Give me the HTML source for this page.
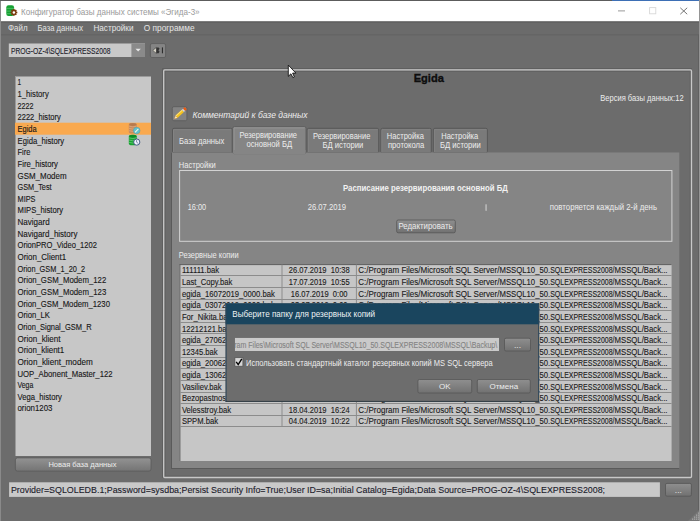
<!DOCTYPE html>
<html><head><meta charset="utf-8"><title>Конфигуратор базы данных системы «Эгида-3»</title>
<style>html,body{margin:0;padding:0;width:700px;height:521px;overflow:hidden;background:#6c6c6c;font-family:"Liberation Sans",sans-serif}svg{display:block}</style>
</head><body>
<svg width="700" height="521" viewBox="0 0 700 521" font-family="Liberation Sans, sans-serif"><rect x="0" y="0" width="700" height="521" fill="#6c6c6c" /><rect x="0" y="0" width="1" height="521" fill="#8a8a8a" /><rect x="0" y="0" width="612" height="1" fill="#5c5c5c" /><rect x="612" y="0" width="88" height="1" fill="#3d6fb5" /><rect x="1" y="1" width="698" height="20.6" fill="#ffffff" /><rect x="698" y="22" width="1" height="499" fill="#606060" /><rect x="699" y="0" width="1" height="521" fill="#8a8a8a" /><g><rect x="6.3" y="5.2" width="7.8" height="10.8" rx="2.2" fill="#14a032"/><line x1="6.3" y1="8.4" x2="14.1" y2="8.4" stroke="#6ccf82" stroke-width="0.6"/><line x1="6.3" y1="11.1" x2="14.1" y2="11.1" stroke="#6ccf82" stroke-width="0.6"/><line x1="6.3" y1="13.7" x2="14.1" y2="13.7" stroke="#6ccf82" stroke-width="0.6"/><polygon points="17.32,11.64 17.32,13.16 16.24,13.28 16.18,13.43 16.86,14.28 15.78,15.36 14.93,14.68 14.78,14.74 14.66,15.82 13.14,15.82 13.02,14.74 12.87,14.68 12.02,15.36 10.94,14.28 11.62,13.43 11.56,13.28 10.48,13.16 10.48,11.64 11.56,11.52 11.62,11.37 10.94,10.52 12.02,9.44 12.87,10.12 13.02,10.06 13.14,8.98 14.66,8.98 14.78,10.06 14.93,10.12 15.78,9.44 16.86,10.52 16.18,11.37 16.24,11.52" fill="#7a3a0c"/><circle cx="13.9" cy="12.4" r="1.25" fill="#ffffff"/></g><text x="21.1" y="14.6" font-size="9.6" fill="#9a9a9a" textLength="178.5" lengthAdjust="spacingAndGlyphs">Конфигуратор базы данных системы «Эгида-3»</text><line x1="618" y1="10.9" x2="625" y2="10.9" stroke="#9a9a9a" stroke-width="1"/><rect x="649.6" y="7.6" width="6.2" height="6.2" fill="none" stroke="#d8d8d8" stroke-width="0.9" /><path d="M680.3 7.8 L687.2 14.2 M687.2 7.8 L680.3 14.2" stroke="#666" stroke-width="0.9"/><rect x="1" y="21.6" width="698" height="13" fill="#6b6b6b" /><line x1="1" y1="22" x2="699" y2="22" stroke="#5a5a5a" stroke-width="1"/><line x1="1" y1="34.8" x2="699" y2="34.8" stroke="#636363" stroke-width="1"/><text x="8" y="31.1" font-size="9" fill="#e4e4e4" textLength="19.6" lengthAdjust="spacingAndGlyphs">Файл</text><text x="37.5" y="31.1" font-size="9" fill="#e4e4e4" textLength="45.5" lengthAdjust="spacingAndGlyphs">База данных</text><text x="93.4" y="31.1" font-size="9" fill="#e4e4e4" textLength="40.1" lengthAdjust="spacingAndGlyphs">Настройки</text><text x="143.8" y="31.1" font-size="9" fill="#e4e4e4" textLength="50.8" lengthAdjust="spacingAndGlyphs">О программе</text><rect x="8.8" y="43.5" width="136.2" height="13.5" fill="#c9c9c9" /><rect x="131.4" y="43.5" width="13.6" height="13.5" fill="#8a8a8a" /><path d="M135.5 48.8 L140.8 48.8 L138.15 51.6 Z" fill="#e8e8e8"/><text x="11" y="54" font-size="9" fill="#1c1c2a" textLength="99.5" lengthAdjust="spacingAndGlyphs" stroke="#1c1c2a" stroke-width="0.12">PROG-OZ-4\SQLEXPRESS2008</text><rect x="150.4" y="43.6" width="15.2" height="13.9" fill="#848484" stroke="#5a5a5a" stroke-width="0.8" rx="1.5" /><path d="M152.8 50.4 L156.4 47.4 L156.4 53.4 Z" fill="#dcd8cc" stroke="#2e2e2e" stroke-width="0.5"/><path d="M156.4 47.6 L158.6 47.6 L159.6 48.8 L158.4 50.3 L159.6 51.8 L158.6 53.2 L156.4 53.2 Z" fill="#333333"/><rect x="161.9" y="47.4" width="1.1" height="5.9" fill="#2e2e2e" /><rect x="15" y="76" width="136" height="380" fill="#c7c7c7" /><line x1="15.5" y1="76" x2="15.5" y2="456" stroke="#9a9a9a" stroke-width="1"/><line x1="15" y1="76.5" x2="151" y2="76.5" stroke="#9a9a9a" stroke-width="1"/><rect x="15" y="122.7" width="136" height="12" fill="#f9a94f" /><text transform="translate(17.5,85.35) scale(0.72,1)" x="0" y="0" font-size="9" fill="#161616" stroke="#161616" stroke-width="0.12">1</text><text transform="translate(17.5,96.996) scale(0.857,1)" x="0" y="0" font-size="9" fill="#161616" stroke="#161616" stroke-width="0.12">1_history</text><text transform="translate(17.5,108.642) scale(0.8,1)" x="0" y="0" font-size="9" fill="#161616" stroke="#161616" stroke-width="0.12">2222</text><text transform="translate(17.5,120.288) scale(0.84,1)" x="0" y="0" font-size="9" fill="#161616" stroke="#161616" stroke-width="0.12">2222_history</text><text transform="translate(17.5,131.934) scale(0.835,1)" x="0" y="0" font-size="9" fill="#161616" stroke="#161616" stroke-width="0.12">Egida</text><text transform="translate(17.5,143.57999999999998) scale(0.858,1)" x="0" y="0" font-size="9" fill="#161616" stroke="#161616" stroke-width="0.12">Egida_history</text><text transform="translate(17.5,155.226) scale(0.833,1)" x="0" y="0" font-size="9" fill="#161616" stroke="#161616" stroke-width="0.12">Fire</text><text transform="translate(17.5,166.872) scale(0.862,1)" x="0" y="0" font-size="9" fill="#161616" stroke="#161616" stroke-width="0.12">Fire_history</text><text transform="translate(17.5,178.518) scale(0.885,1)" x="0" y="0" font-size="9" fill="#161616" stroke="#161616" stroke-width="0.12">GSM_Modem</text><text transform="translate(17.5,190.164) scale(0.814,1)" x="0" y="0" font-size="9" fill="#161616" stroke="#161616" stroke-width="0.12">GSM_Test</text><text transform="translate(17.5,201.81) scale(0.818,1)" x="0" y="0" font-size="9" fill="#161616" stroke="#161616" stroke-width="0.12">MIPS</text><text transform="translate(17.5,213.456) scale(0.852,1)" x="0" y="0" font-size="9" fill="#161616" stroke="#161616" stroke-width="0.12">MIPS_history</text><text transform="translate(17.5,225.102) scale(0.894,1)" x="0" y="0" font-size="9" fill="#161616" stroke="#161616" stroke-width="0.12">Navigard</text><text transform="translate(17.5,236.74800000000002) scale(0.888,1)" x="0" y="0" font-size="9" fill="#161616" stroke="#161616" stroke-width="0.12">Navigard_history</text><text transform="translate(17.5,248.394) scale(0.843,1)" x="0" y="0" font-size="9" fill="#161616" stroke="#161616" stroke-width="0.12">OrionPRO_Video_1202</text><text transform="translate(17.5,260.03999999999996) scale(0.885,1)" x="0" y="0" font-size="9" fill="#161616" stroke="#161616" stroke-width="0.12">Orion_Client1</text><text transform="translate(17.5,271.68600000000004) scale(0.82,1)" x="0" y="0" font-size="9" fill="#161616" stroke="#161616" stroke-width="0.12">Orion_GSM_1_20_2</text><text transform="translate(17.5,283.332) scale(0.867,1)" x="0" y="0" font-size="9" fill="#161616" stroke="#161616" stroke-width="0.12">Orion_GSM_Modem_122</text><text transform="translate(17.5,294.978) scale(0.867,1)" x="0" y="0" font-size="9" fill="#161616" stroke="#161616" stroke-width="0.12">Orion_GSM_Modem_123</text><text transform="translate(17.5,306.624) scale(0.86,1)" x="0" y="0" font-size="9" fill="#161616" stroke="#161616" stroke-width="0.12">Orion_GSM_Modem_1230</text><text transform="translate(17.5,318.27) scale(0.855,1)" x="0" y="0" font-size="9" fill="#161616" stroke="#161616" stroke-width="0.12">Orion_LK</text><text transform="translate(17.5,329.91600000000005) scale(0.834,1)" x="0" y="0" font-size="9" fill="#161616" stroke="#161616" stroke-width="0.12">Orion_Signal_GSM_R</text><text transform="translate(17.5,341.562) scale(0.896,1)" x="0" y="0" font-size="9" fill="#161616" stroke="#161616" stroke-width="0.12">Orion_klient</text><text transform="translate(17.5,353.20799999999997) scale(0.881,1)" x="0" y="0" font-size="9" fill="#161616" stroke="#161616" stroke-width="0.12">Orion_klient1</text><text transform="translate(17.5,364.85400000000004) scale(0.908,1)" x="0" y="0" font-size="9" fill="#161616" stroke="#161616" stroke-width="0.12">Orion_klient_modem</text><text transform="translate(17.5,376.5) scale(0.86,1)" x="0" y="0" font-size="9" fill="#161616" stroke="#161616" stroke-width="0.12">UOP_Abonent_Master_122</text><text transform="translate(17.5,388.1460000000001) scale(0.771,1)" x="0" y="0" font-size="9" fill="#161616" stroke="#161616" stroke-width="0.12">Vega</text><text transform="translate(17.5,399.79200000000003) scale(0.85,1)" x="0" y="0" font-size="9" fill="#161616" stroke="#161616" stroke-width="0.12">Vega_history</text><text transform="translate(17.5,411.438) scale(0.875,1)" x="0" y="0" font-size="9" fill="#161616" stroke="#161616" stroke-width="0.12">orion1203</text><rect x="128.8" y="123.0" width="8" height="10.5" rx="3" ry="1.8" fill="#c98b5a"/><ellipse cx="132.8" cy="124.6" rx="3.6" ry="1.3" fill="#b87a4c"/><path d="M129.10000000000002 126.2 Q132.8 127.5 136.5 126.2" stroke="#e8b48a" stroke-width="0.6" fill="none"/><path d="M129.10000000000002 128.4 Q132.8 129.70000000000002 136.5 128.4" stroke="#e8b48a" stroke-width="0.6" fill="none"/><path d="M129.10000000000002 130.7 Q132.8 132.0 136.5 130.7" stroke="#e8b48a" stroke-width="0.6" fill="none"/><circle cx="136.7" cy="130.6" r="3.3" fill="#62c2cc" stroke="#4a9aa8" stroke-width="0.5"/><path d="M135 132.3 L138.4 128.9" stroke="#eef8e8" stroke-width="1.1"/><rect x="128.8" y="134.7" width="8" height="10.5" rx="3" ry="1.8" fill="#17a232"/><ellipse cx="132.8" cy="136.29999999999998" rx="3.6" ry="1.3" fill="#0d8a26"/><path d="M129.10000000000002 137.89999999999998 Q132.8 139.2 136.5 137.89999999999998" stroke="#86d892" stroke-width="0.6" fill="none"/><path d="M129.10000000000002 140.1 Q132.8 141.4 136.5 140.1" stroke="#86d892" stroke-width="0.6" fill="none"/><path d="M129.10000000000002 142.39999999999998 Q132.8 143.7 136.5 142.39999999999998" stroke="#86d892" stroke-width="0.6" fill="none"/><circle cx="136.75" cy="142.1" r="3.1" fill="#f2f2ff" stroke="#34507a" stroke-width="0.9"/><path d="M136.6 140.1 L136.6 142.2 L138.3 143.4" stroke="#5a6f94" stroke-width="0.8" fill="none"/><defs><linearGradient id="btn" x1="0" y1="0" x2="0" y2="1"><stop offset="0" stop-color="#939393"/><stop offset="1" stop-color="#747474"/></linearGradient><linearGradient id="btn2" x1="0" y1="0" x2="0" y2="1"><stop offset="0" stop-color="#8f8f8f"/><stop offset="1" stop-color="#717171"/></linearGradient></defs><rect x="15.4" y="457.9" width="135.6" height="13.2" fill="url(#btn)" stroke="#5a5a5a" stroke-width="0.8" rx="2" /><text x="48.4" y="467.2" font-size="8" fill="#ececec" textLength="68.1" lengthAdjust="spacingAndGlyphs">Новая база данных</text><line x1="162.5" y1="68.5" x2="162.5" y2="478" stroke="#5f5f5f" stroke-width="1"/><line x1="162.5" y1="68.5" x2="692" y2="68.5" stroke="#5f5f5f" stroke-width="1"/><rect x="165.2" y="71.4" width="525" height="404.7" fill="none" stroke="#626262" stroke-width="1" /><rect x="163.7" y="69.9" width="527.8" height="407.6" fill="none" stroke="#c8c8c8" stroke-width="1.3" rx="1" /><text x="428.8" y="81.7" font-size="11.2" fill="#0e0e0e" font-weight="bold" text-anchor="middle" textLength="30.2" lengthAdjust="spacingAndGlyphs" stroke="#0e0e0e" stroke-width="0.35">Egida</text><text x="600.3" y="100.7" font-size="8.5" fill="#ececec" textLength="83.3" lengthAdjust="spacingAndGlyphs">Версия базы данных:12</text><rect x="172.3" y="106.7" width="14.6" height="14" fill="#838383" stroke="#5a5a5a" stroke-width="0.8" rx="1.5" /><g transform="translate(174.3,118.9) rotate(-43)"><path d="M0 0 L3.2 -1.5 L3.2 1.5 Z" fill="#fff2cc" stroke="#d08a30" stroke-width="0.4"/><rect x="3.2" y="-1.5" width="8.6" height="3" fill="#f4c21e"/><rect x="3.2" y="-1.5" width="8.6" height="1" fill="#ffe070"/><rect x="11.8" y="-1.5" width="1.6" height="3" fill="#d8dde0"/><rect x="13.4" y="-1.7" width="2.4" height="3.4" rx="1.2" fill="#ee5a10"/></g><text x="192.4" y="118" font-size="9" fill="#ececec" font-style="italic" textLength="115.2" lengthAdjust="spacingAndGlyphs">Комментарий к базе данных</text><rect x="172.5" y="128.3" width="59.69999999999999" height="24.5" fill="#7a7a7a" stroke="#585858" stroke-width="1" rx="1.5" /><path d="M173.5 152 L173.5 129.8 L231.2 129.8" stroke="#858585" stroke-width="0.8" fill="none"/><rect x="307.2" y="128.3" width="71.5" height="24.5" fill="#7a7a7a" stroke="#585858" stroke-width="1" rx="1.5" /><path d="M308.2 152 L308.2 129.8 L377.7 129.8" stroke="#858585" stroke-width="0.8" fill="none"/><rect x="380.9" y="128.3" width="50.400000000000034" height="24.5" fill="#7a7a7a" stroke="#585858" stroke-width="1" rx="1.5" /><path d="M381.9 152 L381.9 129.8 L430.3 129.8" stroke="#858585" stroke-width="0.8" fill="none"/><rect x="433.4" y="128.3" width="54.0" height="24.5" fill="#7a7a7a" stroke="#585858" stroke-width="1" rx="1.5" /><path d="M434.4 152 L434.4 129.8 L486.4 129.8" stroke="#858585" stroke-width="0.8" fill="none"/><rect x="171" y="152.5" width="508.3" height="316.5" fill="#858585" /><line x1="171" y1="468.5" x2="679.3" y2="468.5" stroke="#5a5a5a" stroke-width="1"/><line x1="171.5" y1="152.5" x2="171.5" y2="469" stroke="#5a5a5a" stroke-width="1"/><rect x="232.8" y="126.6" width="73.2" height="27" fill="#858585" stroke="#5c5c5c" stroke-width="0.9" rx="1.5" /><path d="M234 153 L234 127.9 L304.6 127.9" stroke="#979797" stroke-width="0.9" fill="none"/><rect x="233.3" y="150" width="72.2" height="4" fill="#858585" /><text x="179" y="144" font-size="8.5" fill="#ececec" textLength="45.3" lengthAdjust="spacingAndGlyphs">База данных</text><text x="239.6" y="138.2" font-size="8.5" fill="#ececec" textLength="57.4" lengthAdjust="spacingAndGlyphs">Резервирование</text><text transform="translate(269.3,147.4) scale(0.9,1)" x="0" y="0" font-size="8.5" fill="#ececec" text-anchor="middle">основной БД</text><text x="313" y="138.9" font-size="8.5" fill="#ececec" textLength="57.3" lengthAdjust="spacingAndGlyphs">Резервирование</text><text transform="translate(342.9,147.9) scale(0.9,1)" x="0" y="0" font-size="8.5" fill="#ececec" text-anchor="middle">БД истории</text><text x="386.8" y="138.9" font-size="8.5" fill="#ececec" textLength="37.1" lengthAdjust="spacingAndGlyphs">Настройка</text><text transform="translate(406.1,147.9) scale(0.9,1)" x="0" y="0" font-size="8.5" fill="#ececec" text-anchor="middle">протокола</text><text x="441.2" y="138.9" font-size="8.5" fill="#ececec" textLength="37.1" lengthAdjust="spacingAndGlyphs">Настройка</text><text transform="translate(460.4,147.9) scale(0.9,1)" x="0" y="0" font-size="8.5" fill="#ececec" text-anchor="middle">БД истории</text><text x="178.8" y="167.7" font-size="8.5" fill="#ececec" textLength="37" lengthAdjust="spacingAndGlyphs">Настройки</text><rect x="179.6" y="170.5" width="492.3" height="70.8" fill="none" stroke="#d2d2d2" stroke-width="1" /><text x="343" y="190.7" font-size="8.2" fill="#f2f2f2" font-weight="bold" textLength="164.8" lengthAdjust="spacingAndGlyphs">Расписание резервирования основной БД</text><text x="187.7" y="209.9" font-size="8.5" fill="#ececec" textLength="18.5" lengthAdjust="spacingAndGlyphs">16:00</text><text x="307.7" y="209.9" font-size="8.5" fill="#ececec" textLength="38.3" lengthAdjust="spacingAndGlyphs">26.07.2019</text><rect x="485.6" y="204.3" width="0.9" height="6.5" fill="#e0e0e0" /><text x="549.8" y="209.7" font-size="8.5" fill="#ececec" textLength="107.2" lengthAdjust="spacingAndGlyphs">повторяется каждый 2-й день</text><rect x="396.7" y="220" width="58.6" height="12.8" fill="url(#btn2)" stroke="#555555" stroke-width="0.8" rx="1.5" /><text x="398.4" y="229.1" font-size="8.5" fill="#ececec" textLength="54.3" lengthAdjust="spacingAndGlyphs">Редактировать</text><text x="178.8" y="257.6" font-size="8.5" fill="#ececec" textLength="59.9" lengthAdjust="spacingAndGlyphs">Резервные копии</text><rect x="179.5" y="264.2" width="492.1" height="196.8" fill="#c6c6c6" /><line x1="179.9" y1="264.2" x2="179.9" y2="461" stroke="#5c5c5c" stroke-width="1"/><line x1="179.5" y1="264.6" x2="671.6" y2="264.6" stroke="#5c5c5c" stroke-width="1"/><line x1="180.4" y1="275.5" x2="671.6" y2="275.5" stroke="#8c8c8c" stroke-width="1"/><text transform="translate(181.9,273.4) scale(0.85,1)" x="0" y="0" font-size="9" fill="#1a1a1a" stroke="#1a1a1a" stroke-width="0.12">111111.bak</text><text transform="translate(319.2,273.4) scale(0.84,1)" x="0" y="0" font-size="9" fill="#1a1a1a" text-anchor="middle" stroke="#1a1a1a" stroke-width="0.12">26.07.2019&#160;&#160;10:38</text><text x="358.3" y="273.4" font-size="9" fill="#1a1a1a" textLength="62.2" lengthAdjust="spacingAndGlyphs" stroke="#1a1a1a" stroke-width="0.12">C:/Program Files/</text><text x="420.5" y="273.4" font-size="9" fill="#1a1a1a" textLength="79.0" lengthAdjust="spacingAndGlyphs" stroke="#1a1a1a" stroke-width="0.12">Microsoft SQL Server/</text><text x="499.5" y="273.4" font-size="9" fill="#1a1a1a" textLength="50.7" lengthAdjust="spacingAndGlyphs" stroke="#1a1a1a" stroke-width="0.12">MSSQL10_50.</text><text x="550.2" y="273.4" font-size="9" fill="#1a1a1a" textLength="64.3" lengthAdjust="spacingAndGlyphs" stroke="#1a1a1a" stroke-width="0.12">SQLEXPRESS2008/</text><text x="614.5" y="273.4" font-size="9" fill="#1a1a1a" textLength="53.0" lengthAdjust="spacingAndGlyphs" stroke="#1a1a1a" stroke-width="0.12">MSSQL/Back...</text><line x1="180.4" y1="287.5" x2="671.6" y2="287.5" stroke="#8c8c8c" stroke-width="1"/><text transform="translate(181.9,285.02) scale(0.85,1)" x="0" y="0" font-size="9" fill="#1a1a1a" stroke="#1a1a1a" stroke-width="0.12">Last_Copy.bak</text><text transform="translate(319.2,285.02) scale(0.84,1)" x="0" y="0" font-size="9" fill="#1a1a1a" text-anchor="middle" stroke="#1a1a1a" stroke-width="0.12">17.07.2019&#160;&#160;10:55</text><text x="358.3" y="285.02" font-size="9" fill="#1a1a1a" textLength="62.2" lengthAdjust="spacingAndGlyphs" stroke="#1a1a1a" stroke-width="0.12">C:/Program Files/</text><text x="420.5" y="285.02" font-size="9" fill="#1a1a1a" textLength="79.0" lengthAdjust="spacingAndGlyphs" stroke="#1a1a1a" stroke-width="0.12">Microsoft SQL Server/</text><text x="499.5" y="285.02" font-size="9" fill="#1a1a1a" textLength="50.7" lengthAdjust="spacingAndGlyphs" stroke="#1a1a1a" stroke-width="0.12">MSSQL10_50.</text><text x="550.2" y="285.02" font-size="9" fill="#1a1a1a" textLength="64.3" lengthAdjust="spacingAndGlyphs" stroke="#1a1a1a" stroke-width="0.12">SQLEXPRESS2008/</text><text x="614.5" y="285.02" font-size="9" fill="#1a1a1a" textLength="53.0" lengthAdjust="spacingAndGlyphs" stroke="#1a1a1a" stroke-width="0.12">MSSQL/Back...</text><line x1="180.4" y1="299.5" x2="671.6" y2="299.5" stroke="#8c8c8c" stroke-width="1"/><text transform="translate(181.9,296.64) scale(0.85,1)" x="0" y="0" font-size="9" fill="#1a1a1a" stroke="#1a1a1a" stroke-width="0.12">egida_16072019_0000.bak</text><text transform="translate(319.2,296.64) scale(0.84,1)" x="0" y="0" font-size="9" fill="#1a1a1a" text-anchor="middle" stroke="#1a1a1a" stroke-width="0.12">16.07.2019&#160;&#160;0:00</text><text x="358.3" y="296.64" font-size="9" fill="#1a1a1a" textLength="62.2" lengthAdjust="spacingAndGlyphs" stroke="#1a1a1a" stroke-width="0.12">C:/Program Files/</text><text x="420.5" y="296.64" font-size="9" fill="#1a1a1a" textLength="79.0" lengthAdjust="spacingAndGlyphs" stroke="#1a1a1a" stroke-width="0.12">Microsoft SQL Server/</text><text x="499.5" y="296.64" font-size="9" fill="#1a1a1a" textLength="50.7" lengthAdjust="spacingAndGlyphs" stroke="#1a1a1a" stroke-width="0.12">MSSQL10_50.</text><text x="550.2" y="296.64" font-size="9" fill="#1a1a1a" textLength="64.3" lengthAdjust="spacingAndGlyphs" stroke="#1a1a1a" stroke-width="0.12">SQLEXPRESS2008/</text><text x="614.5" y="296.64" font-size="9" fill="#1a1a1a" textLength="53.0" lengthAdjust="spacingAndGlyphs" stroke="#1a1a1a" stroke-width="0.12">MSSQL/Back...</text><line x1="180.4" y1="310.5" x2="671.6" y2="310.5" stroke="#8c8c8c" stroke-width="1"/><text transform="translate(181.9,308.26) scale(0.85,1)" x="0" y="0" font-size="9" fill="#1a1a1a" stroke="#1a1a1a" stroke-width="0.12">egida_03072019_0000.bak</text><text transform="translate(319.2,308.26) scale(0.84,1)" x="0" y="0" font-size="9" fill="#1a1a1a" text-anchor="middle" stroke="#1a1a1a" stroke-width="0.12">03.07.2019&#160;&#160;0:00</text><text x="358.3" y="308.26" font-size="9" fill="#1a1a1a" textLength="62.2" lengthAdjust="spacingAndGlyphs" stroke="#1a1a1a" stroke-width="0.12">C:/Program Files/</text><text x="420.5" y="308.26" font-size="9" fill="#1a1a1a" textLength="79.0" lengthAdjust="spacingAndGlyphs" stroke="#1a1a1a" stroke-width="0.12">Microsoft SQL Server/</text><text x="499.5" y="308.26" font-size="9" fill="#1a1a1a" textLength="50.7" lengthAdjust="spacingAndGlyphs" stroke="#1a1a1a" stroke-width="0.12">MSSQL10_50.</text><text x="550.2" y="308.26" font-size="9" fill="#1a1a1a" textLength="64.3" lengthAdjust="spacingAndGlyphs" stroke="#1a1a1a" stroke-width="0.12">SQLEXPRESS2008/</text><text x="614.5" y="308.26" font-size="9" fill="#1a1a1a" textLength="53.0" lengthAdjust="spacingAndGlyphs" stroke="#1a1a1a" stroke-width="0.12">MSSQL/Back...</text><line x1="180.4" y1="322.5" x2="671.6" y2="322.5" stroke="#8c8c8c" stroke-width="1"/><text transform="translate(181.9,319.88) scale(0.85,1)" x="0" y="0" font-size="9" fill="#1a1a1a" stroke="#1a1a1a" stroke-width="0.12">For_Nikita.bak</text><text transform="translate(319.2,319.88) scale(0.84,1)" x="0" y="0" font-size="9" fill="#1a1a1a" text-anchor="middle" stroke="#1a1a1a" stroke-width="0.12">02.07.2019&#160;&#160;11:20</text><text x="358.3" y="319.88" font-size="9" fill="#1a1a1a" textLength="62.2" lengthAdjust="spacingAndGlyphs" stroke="#1a1a1a" stroke-width="0.12">C:/Program Files/</text><text x="420.5" y="319.88" font-size="9" fill="#1a1a1a" textLength="79.0" lengthAdjust="spacingAndGlyphs" stroke="#1a1a1a" stroke-width="0.12">Microsoft SQL Server/</text><text x="499.5" y="319.88" font-size="9" fill="#1a1a1a" textLength="50.7" lengthAdjust="spacingAndGlyphs" stroke="#1a1a1a" stroke-width="0.12">MSSQL10_50.</text><text x="550.2" y="319.88" font-size="9" fill="#1a1a1a" textLength="64.3" lengthAdjust="spacingAndGlyphs" stroke="#1a1a1a" stroke-width="0.12">SQLEXPRESS2008/</text><text x="614.5" y="319.88" font-size="9" fill="#1a1a1a" textLength="53.0" lengthAdjust="spacingAndGlyphs" stroke="#1a1a1a" stroke-width="0.12">MSSQL/Back...</text><line x1="180.4" y1="333.5" x2="671.6" y2="333.5" stroke="#8c8c8c" stroke-width="1"/><text transform="translate(181.9,331.49999999999994) scale(0.85,1)" x="0" y="0" font-size="9" fill="#1a1a1a" stroke="#1a1a1a" stroke-width="0.12">12212121.bak</text><text transform="translate(319.2,331.49999999999994) scale(0.84,1)" x="0" y="0" font-size="9" fill="#1a1a1a" text-anchor="middle" stroke="#1a1a1a" stroke-width="0.12">28.06.2019&#160;&#160;14:12</text><text x="358.3" y="331.49999999999994" font-size="9" fill="#1a1a1a" textLength="62.2" lengthAdjust="spacingAndGlyphs" stroke="#1a1a1a" stroke-width="0.12">C:/Program Files/</text><text x="420.5" y="331.49999999999994" font-size="9" fill="#1a1a1a" textLength="79.0" lengthAdjust="spacingAndGlyphs" stroke="#1a1a1a" stroke-width="0.12">Microsoft SQL Server/</text><text x="499.5" y="331.49999999999994" font-size="9" fill="#1a1a1a" textLength="50.7" lengthAdjust="spacingAndGlyphs" stroke="#1a1a1a" stroke-width="0.12">MSSQL10_50.</text><text x="550.2" y="331.49999999999994" font-size="9" fill="#1a1a1a" textLength="64.3" lengthAdjust="spacingAndGlyphs" stroke="#1a1a1a" stroke-width="0.12">SQLEXPRESS2008/</text><text x="614.5" y="331.49999999999994" font-size="9" fill="#1a1a1a" textLength="53.0" lengthAdjust="spacingAndGlyphs" stroke="#1a1a1a" stroke-width="0.12">MSSQL/Back...</text><line x1="180.4" y1="345.5" x2="671.6" y2="345.5" stroke="#8c8c8c" stroke-width="1"/><text transform="translate(181.9,343.11999999999995) scale(0.85,1)" x="0" y="0" font-size="9" fill="#1a1a1a" stroke="#1a1a1a" stroke-width="0.12">egida_27062019_0000.bak</text><text transform="translate(319.2,343.11999999999995) scale(0.84,1)" x="0" y="0" font-size="9" fill="#1a1a1a" text-anchor="middle" stroke="#1a1a1a" stroke-width="0.12">27.06.2019&#160;&#160;0:00</text><text x="358.3" y="343.11999999999995" font-size="9" fill="#1a1a1a" textLength="62.2" lengthAdjust="spacingAndGlyphs" stroke="#1a1a1a" stroke-width="0.12">C:/Program Files/</text><text x="420.5" y="343.11999999999995" font-size="9" fill="#1a1a1a" textLength="79.0" lengthAdjust="spacingAndGlyphs" stroke="#1a1a1a" stroke-width="0.12">Microsoft SQL Server/</text><text x="499.5" y="343.11999999999995" font-size="9" fill="#1a1a1a" textLength="50.7" lengthAdjust="spacingAndGlyphs" stroke="#1a1a1a" stroke-width="0.12">MSSQL10_50.</text><text x="550.2" y="343.11999999999995" font-size="9" fill="#1a1a1a" textLength="64.3" lengthAdjust="spacingAndGlyphs" stroke="#1a1a1a" stroke-width="0.12">SQLEXPRESS2008/</text><text x="614.5" y="343.11999999999995" font-size="9" fill="#1a1a1a" textLength="53.0" lengthAdjust="spacingAndGlyphs" stroke="#1a1a1a" stroke-width="0.12">MSSQL/Back...</text><line x1="180.4" y1="357.5" x2="671.6" y2="357.5" stroke="#8c8c8c" stroke-width="1"/><text transform="translate(181.9,354.73999999999995) scale(0.85,1)" x="0" y="0" font-size="9" fill="#1a1a1a" stroke="#1a1a1a" stroke-width="0.12">12345.bak</text><text transform="translate(319.2,354.73999999999995) scale(0.84,1)" x="0" y="0" font-size="9" fill="#1a1a1a" text-anchor="middle" stroke="#1a1a1a" stroke-width="0.12">25.06.2019&#160;&#160;16:03</text><text x="358.3" y="354.73999999999995" font-size="9" fill="#1a1a1a" textLength="62.2" lengthAdjust="spacingAndGlyphs" stroke="#1a1a1a" stroke-width="0.12">C:/Program Files/</text><text x="420.5" y="354.73999999999995" font-size="9" fill="#1a1a1a" textLength="79.0" lengthAdjust="spacingAndGlyphs" stroke="#1a1a1a" stroke-width="0.12">Microsoft SQL Server/</text><text x="499.5" y="354.73999999999995" font-size="9" fill="#1a1a1a" textLength="50.7" lengthAdjust="spacingAndGlyphs" stroke="#1a1a1a" stroke-width="0.12">MSSQL10_50.</text><text x="550.2" y="354.73999999999995" font-size="9" fill="#1a1a1a" textLength="64.3" lengthAdjust="spacingAndGlyphs" stroke="#1a1a1a" stroke-width="0.12">SQLEXPRESS2008/</text><text x="614.5" y="354.73999999999995" font-size="9" fill="#1a1a1a" textLength="53.0" lengthAdjust="spacingAndGlyphs" stroke="#1a1a1a" stroke-width="0.12">MSSQL/Back...</text><line x1="180.4" y1="368.5" x2="671.6" y2="368.5" stroke="#8c8c8c" stroke-width="1"/><text transform="translate(181.9,366.35999999999996) scale(0.85,1)" x="0" y="0" font-size="9" fill="#1a1a1a" stroke="#1a1a1a" stroke-width="0.12">egida_20062019_0000.bak</text><text transform="translate(319.2,366.35999999999996) scale(0.84,1)" x="0" y="0" font-size="9" fill="#1a1a1a" text-anchor="middle" stroke="#1a1a1a" stroke-width="0.12">20.06.2019&#160;&#160;0:00</text><text x="358.3" y="366.35999999999996" font-size="9" fill="#1a1a1a" textLength="62.2" lengthAdjust="spacingAndGlyphs" stroke="#1a1a1a" stroke-width="0.12">C:/Program Files/</text><text x="420.5" y="366.35999999999996" font-size="9" fill="#1a1a1a" textLength="79.0" lengthAdjust="spacingAndGlyphs" stroke="#1a1a1a" stroke-width="0.12">Microsoft SQL Server/</text><text x="499.5" y="366.35999999999996" font-size="9" fill="#1a1a1a" textLength="50.7" lengthAdjust="spacingAndGlyphs" stroke="#1a1a1a" stroke-width="0.12">MSSQL10_50.</text><text x="550.2" y="366.35999999999996" font-size="9" fill="#1a1a1a" textLength="64.3" lengthAdjust="spacingAndGlyphs" stroke="#1a1a1a" stroke-width="0.12">SQLEXPRESS2008/</text><text x="614.5" y="366.35999999999996" font-size="9" fill="#1a1a1a" textLength="53.0" lengthAdjust="spacingAndGlyphs" stroke="#1a1a1a" stroke-width="0.12">MSSQL/Back...</text><line x1="180.4" y1="380.5" x2="671.6" y2="380.5" stroke="#8c8c8c" stroke-width="1"/><text transform="translate(181.9,377.97999999999996) scale(0.85,1)" x="0" y="0" font-size="9" fill="#1a1a1a" stroke="#1a1a1a" stroke-width="0.12">egida_13062019_0000.bak</text><text transform="translate(319.2,377.97999999999996) scale(0.84,1)" x="0" y="0" font-size="9" fill="#1a1a1a" text-anchor="middle" stroke="#1a1a1a" stroke-width="0.12">13.06.2019&#160;&#160;0:00</text><text x="358.3" y="377.97999999999996" font-size="9" fill="#1a1a1a" textLength="62.2" lengthAdjust="spacingAndGlyphs" stroke="#1a1a1a" stroke-width="0.12">C:/Program Files/</text><text x="420.5" y="377.97999999999996" font-size="9" fill="#1a1a1a" textLength="79.0" lengthAdjust="spacingAndGlyphs" stroke="#1a1a1a" stroke-width="0.12">Microsoft SQL Server/</text><text x="499.5" y="377.97999999999996" font-size="9" fill="#1a1a1a" textLength="50.7" lengthAdjust="spacingAndGlyphs" stroke="#1a1a1a" stroke-width="0.12">MSSQL10_50.</text><text x="550.2" y="377.97999999999996" font-size="9" fill="#1a1a1a" textLength="64.3" lengthAdjust="spacingAndGlyphs" stroke="#1a1a1a" stroke-width="0.12">SQLEXPRESS2008/</text><text x="614.5" y="377.97999999999996" font-size="9" fill="#1a1a1a" textLength="53.0" lengthAdjust="spacingAndGlyphs" stroke="#1a1a1a" stroke-width="0.12">MSSQL/Back...</text><line x1="180.4" y1="392.5" x2="671.6" y2="392.5" stroke="#8c8c8c" stroke-width="1"/><text transform="translate(181.9,389.59999999999997) scale(0.85,1)" x="0" y="0" font-size="9" fill="#1a1a1a" stroke="#1a1a1a" stroke-width="0.12">Vasiliev.bak</text><text transform="translate(319.2,389.59999999999997) scale(0.84,1)" x="0" y="0" font-size="9" fill="#1a1a1a" text-anchor="middle" stroke="#1a1a1a" stroke-width="0.12">10.06.2019&#160;&#160;12:44</text><text x="358.3" y="389.59999999999997" font-size="9" fill="#1a1a1a" textLength="62.2" lengthAdjust="spacingAndGlyphs" stroke="#1a1a1a" stroke-width="0.12">C:/Program Files/</text><text x="420.5" y="389.59999999999997" font-size="9" fill="#1a1a1a" textLength="79.0" lengthAdjust="spacingAndGlyphs" stroke="#1a1a1a" stroke-width="0.12">Microsoft SQL Server/</text><text x="499.5" y="389.59999999999997" font-size="9" fill="#1a1a1a" textLength="50.7" lengthAdjust="spacingAndGlyphs" stroke="#1a1a1a" stroke-width="0.12">MSSQL10_50.</text><text x="550.2" y="389.59999999999997" font-size="9" fill="#1a1a1a" textLength="64.3" lengthAdjust="spacingAndGlyphs" stroke="#1a1a1a" stroke-width="0.12">SQLEXPRESS2008/</text><text x="614.5" y="389.59999999999997" font-size="9" fill="#1a1a1a" textLength="53.0" lengthAdjust="spacingAndGlyphs" stroke="#1a1a1a" stroke-width="0.12">MSSQL/Back...</text><line x1="180.4" y1="403.5" x2="671.6" y2="403.5" stroke="#8c8c8c" stroke-width="1"/><text transform="translate(181.9,401.21999999999997) scale(0.85,1)" x="0" y="0" font-size="9" fill="#1a1a1a" stroke="#1a1a1a" stroke-width="0.12">Bezopastnost.bak</text><text transform="translate(319.2,401.21999999999997) scale(0.84,1)" x="0" y="0" font-size="9" fill="#1a1a1a" text-anchor="middle" stroke="#1a1a1a" stroke-width="0.12">24.05.2019&#160;&#160;9:31</text><text x="358.3" y="401.21999999999997" font-size="9" fill="#1a1a1a" textLength="62.2" lengthAdjust="spacingAndGlyphs" stroke="#1a1a1a" stroke-width="0.12">C:/Program Files/</text><text x="420.5" y="401.21999999999997" font-size="9" fill="#1a1a1a" textLength="79.0" lengthAdjust="spacingAndGlyphs" stroke="#1a1a1a" stroke-width="0.12">Microsoft SQL Server/</text><text x="499.5" y="401.21999999999997" font-size="9" fill="#1a1a1a" textLength="50.7" lengthAdjust="spacingAndGlyphs" stroke="#1a1a1a" stroke-width="0.12">MSSQL10_50.</text><text x="550.2" y="401.21999999999997" font-size="9" fill="#1a1a1a" textLength="64.3" lengthAdjust="spacingAndGlyphs" stroke="#1a1a1a" stroke-width="0.12">SQLEXPRESS2008/</text><text x="614.5" y="401.21999999999997" font-size="9" fill="#1a1a1a" textLength="53.0" lengthAdjust="spacingAndGlyphs" stroke="#1a1a1a" stroke-width="0.12">MSSQL/Back...</text><line x1="180.4" y1="415.5" x2="671.6" y2="415.5" stroke="#8c8c8c" stroke-width="1"/><text transform="translate(181.9,412.84) scale(0.85,1)" x="0" y="0" font-size="9" fill="#1a1a1a" stroke="#1a1a1a" stroke-width="0.12">Velesstroy.bak</text><text transform="translate(319.2,412.84) scale(0.84,1)" x="0" y="0" font-size="9" fill="#1a1a1a" text-anchor="middle" stroke="#1a1a1a" stroke-width="0.12">18.04.2019&#160;&#160;16:24</text><text x="358.3" y="412.84" font-size="9" fill="#1a1a1a" textLength="62.2" lengthAdjust="spacingAndGlyphs" stroke="#1a1a1a" stroke-width="0.12">C:/Program Files/</text><text x="420.5" y="412.84" font-size="9" fill="#1a1a1a" textLength="79.0" lengthAdjust="spacingAndGlyphs" stroke="#1a1a1a" stroke-width="0.12">Microsoft SQL Server/</text><text x="499.5" y="412.84" font-size="9" fill="#1a1a1a" textLength="50.7" lengthAdjust="spacingAndGlyphs" stroke="#1a1a1a" stroke-width="0.12">MSSQL10_50.</text><text x="550.2" y="412.84" font-size="9" fill="#1a1a1a" textLength="64.3" lengthAdjust="spacingAndGlyphs" stroke="#1a1a1a" stroke-width="0.12">SQLEXPRESS2008/</text><text x="614.5" y="412.84" font-size="9" fill="#1a1a1a" textLength="53.0" lengthAdjust="spacingAndGlyphs" stroke="#1a1a1a" stroke-width="0.12">MSSQL/Back...</text><line x1="180.4" y1="426.5" x2="671.6" y2="426.5" stroke="#8c8c8c" stroke-width="1"/><text transform="translate(181.9,424.46) scale(0.85,1)" x="0" y="0" font-size="9" fill="#1a1a1a" stroke="#1a1a1a" stroke-width="0.12">SPPM.bak</text><text transform="translate(319.2,424.46) scale(0.84,1)" x="0" y="0" font-size="9" fill="#1a1a1a" text-anchor="middle" stroke="#1a1a1a" stroke-width="0.12">04.04.2019&#160;&#160;10:22</text><text x="358.3" y="424.46" font-size="9" fill="#1a1a1a" textLength="62.2" lengthAdjust="spacingAndGlyphs" stroke="#1a1a1a" stroke-width="0.12">C:/Program Files/</text><text x="420.5" y="424.46" font-size="9" fill="#1a1a1a" textLength="79.0" lengthAdjust="spacingAndGlyphs" stroke="#1a1a1a" stroke-width="0.12">Microsoft SQL Server/</text><text x="499.5" y="424.46" font-size="9" fill="#1a1a1a" textLength="50.7" lengthAdjust="spacingAndGlyphs" stroke="#1a1a1a" stroke-width="0.12">MSSQL10_50.</text><text x="550.2" y="424.46" font-size="9" fill="#1a1a1a" textLength="64.3" lengthAdjust="spacingAndGlyphs" stroke="#1a1a1a" stroke-width="0.12">SQLEXPRESS2008/</text><text x="614.5" y="424.46" font-size="9" fill="#1a1a1a" textLength="53.0" lengthAdjust="spacingAndGlyphs" stroke="#1a1a1a" stroke-width="0.12">MSSQL/Back...</text><line x1="282" y1="264.6" x2="282" y2="426.88" stroke="#8c8c8c" stroke-width="1"/><line x1="356.4" y1="264.6" x2="356.4" y2="426.88" stroke="#8c8c8c" stroke-width="1"/><rect x="180.4" y="264.2" width="101.6" height="196" fill="none"/><rect x="225.6" y="303.3" width="313.6" height="98.6" fill="#6d6d6d" /><rect x="225.6" y="303.3" width="313.6" height="21" fill="#1a455e" /><line x1="226.1" y1="303.3" x2="226.1" y2="401.9" stroke="#2a4458" stroke-width="1"/><line x1="538.7" y1="303.3" x2="538.7" y2="401.9" stroke="#2a4458" stroke-width="1"/><line x1="225.6" y1="401.4" x2="539.2" y2="401.4" stroke="#303c44" stroke-width="1"/><text x="232.3" y="316.9" font-size="8.5" fill="#eef2f4" textLength="142.8" lengthAdjust="spacingAndGlyphs">Выберите папку для резервных копий</text><svg x="234.8" y="337.8" width="264.2" height="13.2"><rect width="264.2" height="13.2" fill="#cacaca"/><text x="-0.6" y="10.3" font-size="8.6" fill="#828282" stroke="#828282" stroke-width="0.1" textLength="263" lengthAdjust="spacingAndGlyphs">ram Files\Microsoft SQL Server\MSSQL10_50.SQLEXPRESS2008\MSSQL\Backup\</text></svg><rect x="504.5" y="338.2" width="26" height="12.8" fill="url(#btn2)" stroke="#555555" stroke-width="0.8" rx="1.5" /><text x="517.5" y="347.5" font-size="8.5" fill="#e0e0e0" text-anchor="middle">...</text><rect x="234.9" y="357.7" width="8" height="8.5" fill="#d6d6d6" stroke="#505050" stroke-width="0.7" /><path d="M236.2 361.8 L238.2 364.6 L241.8 358.8" stroke="#000" stroke-width="1.4" fill="none"/><text x="246" y="366.4" font-size="8.5" fill="#ececec" textLength="246.7" lengthAdjust="spacingAndGlyphs">Использовать стандартный каталог резервных копий MS SQL сервера</text><rect x="417.9" y="379.5" width="53.8" height="13.5" fill="url(#btn2)" stroke="#555555" stroke-width="0.8" rx="1.5" /><text x="444.8" y="389.2" font-size="8" fill="#ececec" text-anchor="middle">OK</text><rect x="477.3" y="379.5" width="53" height="13.5" fill="url(#btn2)" stroke="#555555" stroke-width="0.8" rx="1.5" /><text x="503.8" y="389.2" font-size="8" fill="#ececec" text-anchor="middle">Отмена</text><rect x="9.1" y="482.3" width="650.8" height="14.6" fill="#c9c9c9" /><text x="10.9" y="493.4" font-size="9.5" fill="#1a1a2a" textLength="594.2" lengthAdjust="spacingAndGlyphs" stroke="#1a1a2a" stroke-width="0.1">Provider=SQLOLEDB.1;Password=sysdba;Persist Security Info=True;User ID=sa;Initial Catalog=Egida;Data Source=PROG-OZ-4\SQLEXPRESS2008;</text><rect x="665.5" y="483.4" width="25.9" height="12.8" fill="url(#btn2)" stroke="#555555" stroke-width="0.8" rx="1.5" /><text x="678.4" y="492.5" font-size="8.5" fill="#e0e0e0" text-anchor="middle">...</text><path d="M699 510 L699 521 L688 521 Z" fill="#777777"/><rect x="698" y="512.5" width="1.3" height="1.3" fill="#a8a8a8" /><rect x="696" y="514.5" width="1.3" height="1.3" fill="#a8a8a8" /><rect x="698" y="514.5" width="1.3" height="1.3" fill="#a8a8a8" /><rect x="694" y="516.5" width="1.3" height="1.3" fill="#a8a8a8" /><rect x="696" y="516.5" width="1.3" height="1.3" fill="#a8a8a8" /><rect x="698" y="516.5" width="1.3" height="1.3" fill="#a8a8a8" /><rect x="692" y="518.5" width="1.3" height="1.3" fill="#a8a8a8" /><rect x="694" y="518.5" width="1.3" height="1.3" fill="#a8a8a8" /><rect x="696" y="518.5" width="1.3" height="1.3" fill="#a8a8a8" /><rect x="698" y="518.5" width="1.3" height="1.3" fill="#a8a8a8" /><rect x="699" y="0" width="1" height="521" fill="#959595" /><path d="M288.3 65.1 L288.3 76.3 L290.9 73.8 L292.9 77.6 L294.4 76.9 L292.6 73.1 L295.9 73.1 Z" fill="#ffffff" stroke="#000000" stroke-width="0.8" stroke-linejoin="miter"/></svg>
</body></html>
